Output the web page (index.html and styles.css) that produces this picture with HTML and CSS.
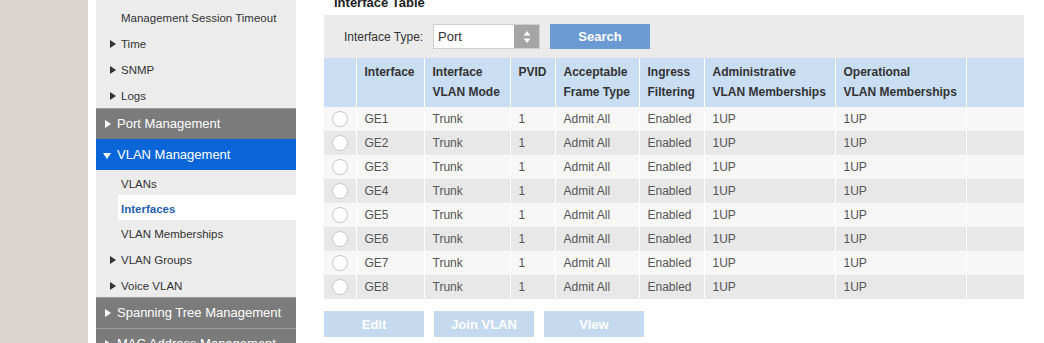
FILE: index.html
```html
<!DOCTYPE html>
<html lang="en">
<head>
    <meta charset="UTF-8">
    <title>VLAN Interfaces</title>
    <link rel="stylesheet" href="styles.css">
</head>
<body>
    <div class="pagina">
        <div class="fondo"></div>

        <!-- Menu lateral -->
        <div class="menu">
            <div class="item">Management Session Timeout</div>
            <div class="item flecha">Time</div>
            <div class="item flecha">SNMP</div>
            <div class="item flecha">Logs</div>
            <div class="grupo">Port Management</div>
            <div class="grupo activo">VLAN Management</div>
            <div class="item corto">VLANs</div>
            <div class="item corto actual">Interfaces</div>
            <div class="item corto">VLAN Memberships</div>
            <div class="item flecha bajo">VLAN Groups</div>
            <div class="item flecha bajo">Voice VLAN</div>
            <div class="grupo">Spanning Tree Management</div>
            <div class="grupo">MAC Address Management</div>
        </div>

        <!-- Contenido -->
        <div class="contenido">
            <div class="titulo">Interface Table</div>
            <div class="filtro">
                <span class="etiqueta">Interface Type:</span>
                <div class="selector">
                    <span class="valor">Port</span>
                    <span class="flechas">
                        <svg width="8" height="14" viewBox="0 0 8 14"><path d="M4 1 L7.5 5.5 H0.5 Z M4 13 L7.5 8.5 H0.5 Z" fill="#fff"/></svg>
                    </span>
                </div>
                <button class="boton buscar">Search</button>
            </div>

            <table class="tabla">
                <colgroup>
                    <col style="width:32px"><col style="width:68px"><col style="width:86px">
                    <col style="width:45px"><col style="width:84px"><col style="width:65px">
                    <col style="width:131px"><col style="width:131px"><col style="width:58px">
                </colgroup>
                <thead>
                    <tr>
                        <th></th>
                        <th>Interface</th>
                        <th>Interface<br>VLAN Mode</th>
                        <th>PVID</th>
                        <th>Acceptable<br>Frame Type</th>
                        <th>Ingress<br>Filtering</th>
                        <th>Administrative<br>VLAN Memberships</th>
                        <th>Operational<br>VLAN Memberships</th>
                        <th></th>
                    </tr>
                </thead>
                <tbody id="filas"></tbody>
            </table>

            <div class="acciones">
                <button class="boton inactivo">Edit</button>
                <button class="boton inactivo">Join VLAN</button>
                <button class="boton inactivo">View</button>
            </div>
        </div>
    </div>

    <script>
        // Filas de la tabla de interfaces
        const filas = document.getElementById('filas');
        for (let i = 1; i <= 8; i++) {
            const tr = document.createElement('tr');
            tr.innerHTML = `
                <td><span class="radio"></span></td>
                <td>GE${i}</td>
                <td>Trunk</td>
                <td>1</td>
                <td>Admit All</td>
                <td>Enabled</td>
                <td>1UP</td>
                <td>1UP</td>
                <td></td>
            `;
            filas.appendChild(tr);
        }
    </script>
</body>
</html>
```

FILE: styles.css
```css
body {
    margin: 0;
    font-family: "Liberation Sans", Arial, sans-serif;
    background-color: #fff;
    color: #333;
}
.pagina {
    display: flex;
    height: 343px;
    overflow: hidden;
}
.fondo {
    width: 88px;
    flex-shrink: 0;
    background-color: #dbd5cf;
}
/* Menu lateral */
.menu {
    width: 200px;
    flex-shrink: 0;
    margin-left: 8px;
    padding-top: 4px;
    background-color: #ececec;
}
.item {
    height: 26px;
    line-height: 28px;
    padding-left: 25px;
    font-size: 11.5px;
    color: #333;
    position: relative;
    overflow: hidden;
}
.item.corto {
    height: 25px;
    line-height: 29px;
}
.item.bajo {
    line-height: 30px;
}
.item.flecha::before,
.grupo::before {
    content: "";
    position: absolute;
    left: 14px;
    top: 10px;
    border-left: 6px solid #333;
    border-top: 4px solid transparent;
    border-bottom: 4px solid transparent;
}
.item.bajo::before {
    top: 11px;
}
.item.actual {
    margin-left: 22px;
    padding-left: 3px;
    background-color: #fff;
    color: #1f5fb0;
    font-weight: bold;
}
.grupo {
    height: 30px;
    line-height: 30px;
    padding-left: 21px;
    font-size: 13px;
    color: #fff;
    background-color: #7b7b7b;
    border-top: 1px solid #9a9a9a;
    position: relative;
}
.grupo::before {
    left: 9px;
    top: 11px;
    border-left-color: #fff;
}
.grupo.activo {
    background-color: #0a66d8;
    border-top-color: #0a66d8;
}
.grupo.activo::before {
    left: 7px;
    top: 13px;
    border-left: 4px solid transparent;
    border-right: 4px solid transparent;
    border-top: 6px solid #fff;
    border-bottom: none;
}
/* Contenido */
.contenido {
    width: 700px;
    flex-shrink: 0;
    margin-left: 28px;
    margin-top: -5px;
}
.titulo {
    font-size: 13px;
    font-weight: bold;
    line-height: 16px;
    height: 20px;
    color: #222;
    padding-left: 10px;
}
.filtro {
    display: flex;
    align-items: center;
    height: 43px;
    padding: 0 20px;
    background-color: #ebebeb;
}
.etiqueta {
    font-size: 12px;
    color: #333;
    width: 89px;
}
.selector {
    display: flex;
    width: 107px;
    height: 25px;
    box-sizing: border-box;
    border: 1px solid #cfcfcf;
    background-color: #fff;
}
.valor {
    flex: 1;
    font-size: 13px;
    line-height: 23px;
    padding-left: 4px;
}
.flechas {
    width: 25px;
    display: flex;
    align-items: center;
    justify-content: center;
    background-color: #a5a5a5;
}
.boton {
    width: 100px;
    height: 25px;
    border: none;
    padding: 0;
    font-family: inherit;
    font-size: 13px;
    font-weight: bold;
    color: #fff;
    background-color: #6c9bd4;
}
.buscar {
    margin-left: 10px;
}
/* Tabla */
.tabla {
    width: 700px;
    border-collapse: collapse;
    table-layout: fixed;
    font-size: 12px;
}
.tabla th {
    background-color: #c9ddf3;
    color: #333;
    text-align: left;
    vertical-align: top;
    font-weight: bold;
    line-height: 20px;
    height: 40px;
    padding: 4px 0 5px 8px;
    border-left: 1px solid #fff;
}
.tabla td {
    height: 24px;
    padding: 0 0 0 8px;
    color: #555;
    border-left: 1px solid #fff;
}
.tabla th:first-child,
.tabla td:first-child {
    border-left: none;
}
.tabla tbody tr:nth-child(odd) td {
    background-color: #f7f7f7;
}
.tabla tbody tr:nth-child(even) td {
    background-color: #e8e8e8;
}
.radio {
    display: block;
    width: 14px;
    height: 14px;
    border: 1px solid #c8c8c8;
    border-radius: 50%;
    background-color: #fff;
}
.acciones {
    display: flex;
    gap: 10px;
    margin-top: 12px;
}
.boton.inactivo {
    height: 26px;
    background-color: #c5d9ef;
}
```
